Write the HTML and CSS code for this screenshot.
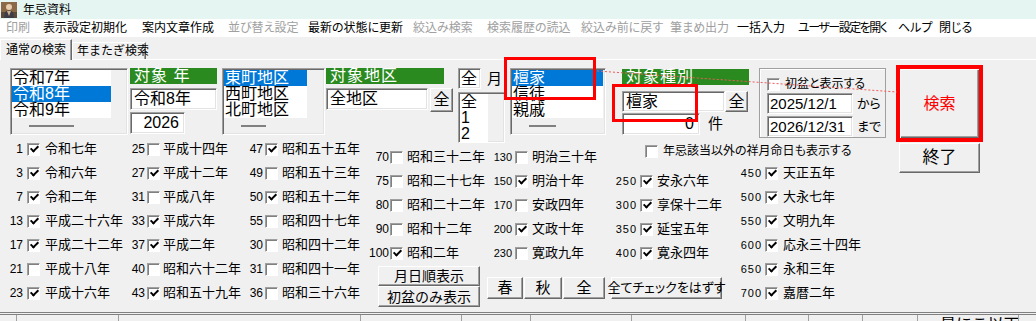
FILE: index.html
```html
<!DOCTYPE html>
<html>
  <head>
    <meta charset="utf-8">
    <title>年忌資料</title>
    <link rel="stylesheet" href="styles.css">
  </head>
  <body>
    <div id="window">
      <div class="titlebar">
        <svg class="appicon" width="16" height="16" viewBox="0 0 16 16">
          <rect width="16" height="16" fill="#8c6a48"/>
          <rect x="0" y="10" width="16" height="6" fill="#5e4a3a"/>
          <circle cx="8" cy="5" r="3" fill="#e8cfae"/>
          <path d="M3 16 L4 10 Q8 7 12 10 L13 16 Z" fill="#3d3d4a"/>
          <path d="M6 9 L8 14 L10 9" fill="#c9b48f"/>
        </svg>
        <span>年忌資料</span>
      </div>

      <div class="menubar">
        <span class="off">印刷</span>
        <span>表示設定初期化</span>
        <span>案内文章作成</span>
        <span class="off">並び替え設定</span>
        <span>最新の状態に更新</span>
        <span class="off">絞込み検索</span>
        <span class="off">検索履歴の読込</span>
        <span class="off">絞込み前に戻す</span>
        <span class="off">筆まめ出力</span>
        <span>一括入力</span>
        <span class="tight">ユーザー設定を開く</span>
        <span>ヘルプ</span>
        <span>閉じる</span>
      </div>

      <div class="tabs">
        <div class="tab active">通常の検索</div>
        <div class="tab">年またぎ検索</div>
      </div>

      <div class="page">
        <div class="form">
          <div class="left">
            <div class="top">
              <div class="listbox lb-year">
                <div class="items">
                  <div class="row">令和7年</div>
                  <div class="row sel">令和8年</div>
                  <div class="row">令和9年</div>
                </div>
                <div class="thumb"></div>
              </div>

              <div class="field f-year">
                <div class="head">対象 年</div>
                <div class="textbox">令和8年</div>
                <div class="textbox right">2026</div>
              </div>

              <div class="listbox lb-area">
                <div class="items">
                  <div class="row sel">東町地区</div>
                  <div class="row">西町地区</div>
                  <div class="row">北町地区</div>
                </div>
                <div class="thumb"></div>
              </div>

              <div class="field f-area">
                <div class="head">対象地区</div>
                <div class="pair">
                  <div class="textbox">全地区</div>
                  <button class="btn all">全</button>
                </div>
              </div>

              <div class="field f-month">
                <div class="pair">
                  <div class="textbox">全</div>
                  <span class="unit">月</span>
                </div>
                <div class="listbox lb-month">
                  <div class="items">
                    <div class="row">全</div>
                    <div class="row">1</div>
                    <div class="row">2</div>
                  </div>
                </div>
              </div>

              <div class="listbox lb-type">
                <div class="items">
                  <div class="row sel">檀家</div>
                  <div class="row">信徒</div>
                  <div class="row">親戚</div>
                </div>
                <div class="thumb"></div>
              </div>

              <div class="field f-type">
                <div class="head">対象種別</div>
                <div class="pair">
                  <div class="textbox">檀家</div>
                  <button class="btn all">全</button>
                </div>
                <div class="pair count">
                  <div class="textbox right">0</div>
                  <span class="unit">件</span>
                </div>
              </div>

              <div class="dates">
                <div class="check">
                  <span class="cb"></span>
                  <span>初盆と表示する</span>
                </div>
                <div class="pair">
                  <div class="textbox">2025/12/1</div>
                  <span class="unit">から</span>
                </div>
                <div class="pair">
                  <div class="textbox">2026/12/31</div>
                  <span class="unit">まで</span>
                </div>
              </div>
            </div>

            <div class="lower">
              <div class="col c1">
                <div class="item"><span class="num">1</span><span class="cb on"></span><span class="lbl">令和七年</span></div>
                <div class="item"><span class="num">3</span><span class="cb on"></span><span class="lbl">令和六年</span></div>
                <div class="item"><span class="num">7</span><span class="cb on"></span><span class="lbl">令和二年</span></div>
                <div class="item"><span class="num">13</span><span class="cb on"></span><span class="lbl">平成二十六年</span></div>
                <div class="item"><span class="num">17</span><span class="cb on"></span><span class="lbl">平成二十二年</span></div>
                <div class="item"><span class="num">21</span><span class="cb"></span><span class="lbl">平成十八年</span></div>
                <div class="item"><span class="num">23</span><span class="cb on"></span><span class="lbl">平成十六年</span></div>
              </div>
              <div class="col c2">
                <div class="item"><span class="num">25</span><span class="cb"></span><span class="lbl">平成十四年</span></div>
                <div class="item"><span class="num">27</span><span class="cb on"></span><span class="lbl">平成十二年</span></div>
                <div class="item"><span class="num">31</span><span class="cb"></span><span class="lbl">平成八年</span></div>
                <div class="item"><span class="num">33</span><span class="cb on"></span><span class="lbl">平成六年</span></div>
                <div class="item"><span class="num">37</span><span class="cb on"></span><span class="lbl">平成二年</span></div>
                <div class="item"><span class="num">40</span><span class="cb"></span><span class="lbl">昭和六十二年</span></div>
                <div class="item"><span class="num">43</span><span class="cb on"></span><span class="lbl">昭和五十九年</span></div>
              </div>
              <div class="col c3">
                <div class="item"><span class="num">47</span><span class="cb on"></span><span class="lbl">昭和五十五年</span></div>
                <div class="item"><span class="num">49</span><span class="cb"></span><span class="lbl">昭和五十三年</span></div>
                <div class="item"><span class="num">50</span><span class="cb on"></span><span class="lbl">昭和五十二年</span></div>
                <div class="item"><span class="num">55</span><span class="cb"></span><span class="lbl">昭和四十七年</span></div>
                <div class="item"><span class="num">30</span><span class="cb"></span><span class="lbl">昭和四十二年</span></div>
                <div class="item"><span class="num">31</span><span class="cb"></span><span class="lbl">昭和四十一年</span></div>
                <div class="item"><span class="num">36</span><span class="cb"></span><span class="lbl">昭和三十六年</span></div>
              </div>

              <div class="middle">
                <div class="cols">
                  <div class="col c4">
                    <div class="item"><span class="num">70</span><span class="cb"></span><span class="lbl">昭和三十二年</span></div>
                    <div class="item"><span class="num">75</span><span class="cb"></span><span class="lbl">昭和二十七年</span></div>
                    <div class="item"><span class="num">80</span><span class="cb"></span><span class="lbl">昭和二十二年</span></div>
                    <div class="item"><span class="num">90</span><span class="cb"></span><span class="lbl">昭和十二年</span></div>
                    <div class="item"><span class="num">100</span><span class="cb on"></span><span class="lbl">昭和二年</span></div>
                  </div>
                  <div class="col c5">
                    <div class="item"><span class="num">130</span><span class="cb"></span><span class="lbl">明治三十年</span></div>
                    <div class="item"><span class="num">150</span><span class="cb on"></span><span class="lbl">明治十年</span></div>
                    <div class="item"><span class="num">170</span><span class="cb"></span><span class="lbl">安政四年</span></div>
                    <div class="item"><span class="num">200</span><span class="cb on"></span><span class="lbl">文政十年</span></div>
                    <div class="item"><span class="num">230</span><span class="cb"></span><span class="lbl">寛政九年</span></div>
                  </div>
                  <div class="col c6">
                    <div class="check wide">
                      <span class="cb"></span>
                      <span>年忌該当以外の祥月命日も表示する</span>
                    </div>
                    <div class="item"><span class="num">250</span><span class="cb on"></span><span class="lbl">安永六年</span></div>
                    <div class="item"><span class="num">300</span><span class="cb on"></span><span class="lbl">享保十二年</span></div>
                    <div class="item"><span class="num">350</span><span class="cb on"></span><span class="lbl">延宝五年</span></div>
                    <div class="item"><span class="num">400</span><span class="cb on"></span><span class="lbl">寛永四年</span></div>
                  </div>
                </div>
                <div class="buttons">
                  <div class="stack">
                    <button class="btn sm">月日順表示</button>
                    <button class="btn sm tall">初盆のみ表示</button>
                  </div>
                  <button class="btn season spring">春</button>
                  <button class="btn season autumn">秋</button>
                  <button class="btn season every">全</button>
                  <button class="btn clear">全てチェックをはずす</button>
                </div>
              </div>

              <div class="col c7">
                <div class="item"><span class="num">450</span><span class="cb on"></span><span class="lbl">天正五年</span></div>
                <div class="item"><span class="num">500</span><span class="cb on"></span><span class="lbl">大永七年</span></div>
                <div class="item"><span class="num">550</span><span class="cb on"></span><span class="lbl">文明九年</span></div>
                <div class="item"><span class="num">600</span><span class="cb on"></span><span class="lbl">応永三十四年</span></div>
                <div class="item"><span class="num">650</span><span class="cb on"></span><span class="lbl">永和三年</span></div>
                <div class="item"><span class="num">700</span><span class="cb on"></span><span class="lbl">嘉暦二年</span></div>
              </div>
            </div>
          </div>

          <div class="actions">
            <button class="btn search">検索</button>
            <button class="btn quit">終了</button>
          </div>
        </div>
      </div>

      <div class="statusbar">
        <div></div><div></div><div></div><div></div><div></div><div></div>
        <div></div><div></div><div></div><div></div><div class="status-text">最にこ以下</div><div></div>
      </div>

      <div class="mark mark-list"></div>
      <div class="mark mark-type"></div>
      <svg class="link" width="1036" height="321">
        <line x1="597" y1="71" x2="897" y2="92" stroke="#f05a5a" stroke-width="1" stroke-dasharray="2 2"/>
      </svg>
    </div>
  </body>
</html>
```

FILE: styles.css
```css
* {
  box-sizing: border-box;
}

body {
  margin: 0;
  background: #f0f0f0;
  color: #000;
  font-family: "Liberation Sans", "Noto Sans CJK JP", sans-serif;
  overflow: hidden;
}

#window {
  position: relative;
  width: 1036px;
  height: 321px;
  overflow: hidden;
}

/* title and menu */

.titlebar {
  height: 19px;
  display: flex;
  align-items: center;
  background: #e5f6f2;
  font-size: 12px;
  line-height: 14px;
}

.appicon {
  margin: 0 6px 0 1px;
}

.menubar {
  height: 18px;
  display: grid;
  grid-template-columns: 37px 99px 86px 80px 105px 74px 94px 89px 67px 61px 100px 41px auto;
  align-items: center;
  padding-left: 6px;
  background: #fff;
  font-size: 12px;
  line-height: 18px;
  white-space: nowrap;
  font-feature-settings: "palt";
}

.menubar .off {
  color: #a0a0a0;
}

.menubar .tight {
  letter-spacing: -1.5px;
}

/* tabs */

.tabs {
  height: 22px;
  display: flex;
  align-items: flex-end;
  font-size: 12px;
  line-height: 16px;
  position: relative;
  z-index: 1;
}

.tab {
  height: 17px;
  padding-left: 4px;
  border-top: 1px solid #fff;
  border-left: 1px solid #fff;
  border-right: 1px solid #696969;
  box-shadow: inset -1px 0 #a0a0a0;
  white-space: nowrap;
}

.tab.active {
  width: 72px;
  height: 21px;
  margin-bottom: -1px;
  padding: 2px 0 0 5px;
  background: #f0f0f0;
}

.tab + .tab {
  width: 74px;
}

/* page */

.page {
  height: 253px;
  border-top: 1px solid #fff;
}

.form {
  display: flex;
}

.left {
  width: 886px;
}

.top {
  height: 69px;
  margin-top: 8px;
  display: flex;
  align-items: flex-start;
}

.listbox,
.textbox {
  border: 1px solid;
  border-color: #a0a0a0 #fff #fff #a0a0a0;
  box-shadow: inset 1px 1px #696969, inset -1px -1px #e3e3e3;
}

.listbox {
  height: 67px;
  padding: 1px;
}

.items {
  background: #fff;
  height: 48px;
  overflow: hidden;
}

.row {
  height: 16px;
  padding-left: 1px;
  font-size: 16px;
  line-height: 16px;
  white-space: nowrap;
}

.row.sel {
  background: #0078d7;
  color: #fff;
}

.thumb {
  height: 2px;
  margin: 7px 0 0 17px;
  background: #808080;
}

.lb-year {
  width: 118px;
  margin-left: 10px;
}

.lb-year .items {
  width: 99px;
}

.lb-year .thumb {
  width: 45px;
}

.lb-area {
  width: 103px;
  margin-left: 5px;
}

.lb-area .items {
  width: 83px;
}

.lb-area .thumb {
  width: 25px;
}

.lb-type {
  width: 96px;
  margin-left: 5px;
}

.lb-type .items {
  width: 91px;
}

.lb-type .thumb {
  width: 27px;
}

.head {
  height: 16px;
  padding-left: 4px;
  background: #2a8a20;
  color: #fff;
  font-size: 16px;
  line-height: 16px;
  letter-spacing: 1px;
  white-space: nowrap;
}

.textbox {
  height: 22px;
  padding-left: 3px;
  background: #fff;
  font-size: 16px;
  line-height: 20px;
  white-space: nowrap;
}

.textbox.right {
  text-align: right;
  padding: 0 5px 0 0;
}

.pair {
  display: flex;
  align-items: center;
}

.unit {
  font-size: 15px;
  line-height: 18px;
  white-space: nowrap;
}

.f-year {
  width: 87px;
  margin-left: 2px;
}

.f-year .head + .textbox {
  margin-top: 4px;
}

.f-year .right {
  width: 55px;
  margin-top: 2px;
}

.f-area {
  width: 127px;
  margin-left: 1px;
}

.f-area .head {
  width: 118px;
}

.f-area .pair {
  margin-top: 4px;
  align-items: flex-start;
}

.f-area .textbox {
  width: 102px;
}

.btn {
  display: flex;
  align-items: center;
  justify-content: center;
  padding: 0;
  background: #f0f0f0;
  color: #000;
  font-family: inherit;
  border: 1px solid;
  border-color: #fff #696969 #696969 #fff;
  box-shadow: inset -1px -1px #a0a0a0;
  white-space: nowrap;
}

.btn.all {
  width: 23px;
  height: 24px;
  margin-left: 2px;
  font-size: 16px;
  line-height: 18px;
}

.f-month {
  width: 47px;
  margin-left: 5px;
}

.f-month .textbox {
  width: 23px;
  height: 21px;
  padding-left: 2px;
}

.f-month .unit {
  margin-left: 6px;
}

.lb-month {
  width: 47px;
  height: 51px;
  margin-top: 3px;
}

.lb-month .items {
  width: 28px;
  height: 49px;
}

.f-type {
  width: 127px;
  margin: 1px 0 0 16px;
}

.f-type .head + .pair {
  margin-top: 6px;
}

.f-type .textbox {
  width: 103px;
  height: 21px;
}

.f-type .btn.all {
  height: 21px;
  margin-left: 0;
}

.count {
  margin-top: 1px;
}

.f-type .count .textbox {
  width: 78px;
  height: 22px;
}

.count .unit {
  margin-left: 8px;
}

.dates {
  width: 127px;
  height: 70px;
  margin-left: 10px;
  padding-left: 7px;
  border: 1px solid #a0a0a0;
  box-shadow: inset 1px 1px #fff;
}

.dates .check {
  margin-top: 8px;
}

.dates .pair {
  margin-top: 2px;
}

.dates .textbox {
  width: 86px;
  height: 21px;
  padding-left: 2px;
  font-size: 15px;
  line-height: 19px;
}

.dates .unit {
  margin-left: 4px;
  font-size: 13px;
  font-feature-settings: "palt";
}

.check {
  display: flex;
  align-items: center;
  font-size: 12px;
  line-height: 14px;
  white-space: nowrap;
  font-feature-settings: "palt";
}

.check .cb {
  margin-right: 5px;
}

/* check boxes */

.cb {
  flex: none;
  width: 13px;
  height: 13px;
  display: flex;
  align-items: center;
  justify-content: center;
  background: #fff;
  border: 1px solid;
  border-color: #a0a0a0 #fff #fff #a0a0a0;
  box-shadow: inset 1px 1px #808080;
}

.cb.on::after {
  content: "";
  width: 3px;
  height: 6px;
  margin: -2px 0 0 1px;
  border: solid #000;
  border-width: 0 2px 2px 0;
  transform: rotate(45deg);
}

.lower {
  height: 175px;
  display: flex;
}

.col {
  display: flex;
  flex-direction: column;
}

.item {
  height: 24px;
  display: flex;
  align-items: center;
  white-space: nowrap;
}

.num {
  flex: none;
  text-align: right;
  font-size: 12px;
  line-height: 14px;
}

.lbl {
  font-size: 13px;
  line-height: 16px;
}

.c1 { width: 120px; }
.c1 .num { width: 23px; }
.c1 .cb { margin-left: 4px; }
.c1 .lbl { margin-left: 5px; }

.c2 { width: 120px; }
.c2 .num { width: 25px; }
.c2 .cb { margin-left: 2px; }
.c2 .lbl { margin-left: 3px; }

.c3 { width: 120px; }
.c3 .num { width: 23px; }
.c3 .cb { margin-left: 2px; }
.c3 .lbl { margin-left: 4px; }

.middle {
  width: 362px;
}

.cols {
  height: 128px;
  display: flex;
}

.c4 { width: 125px; padding-top: 8px; }
.c4 .num { width: 29px; }
.c4 .cb { margin-left: 1px; }
.c4 .lbl { margin-left: 4px; }

.c5 { width: 112px; padding-top: 8px; }
.c5 .num { width: 27px; font-size: 11px; }
.c5 .cb { margin-left: 3px; }
.c5 .lbl { margin-left: 4px; }

.c6 { width: 125px; padding-top: 2px; }
.c6 .num { width: 40px; font-size: 11px; letter-spacing: 1px; }
.c6 .cb { margin-left: 3px; }
.c6 .lbl { margin-left: 4px; }

.check.wide {
  height: 24px;
  margin: 0 0 6px 45px;
  font-size: 12px;
}

.c7 { padding-top: 24px; }
.c7 .num { width: 40px; font-size: 11px; letter-spacing: 1px; }
.c7 .cb { margin-left: 3px; }
.c7 .lbl { margin-left: 5px; }

.buttons {
  display: flex;
  align-items: flex-start;
  margin: 1px 0 0 18px;
}

.stack {
  display: flex;
  flex-direction: column;
}

.btn.sm {
  width: 102px;
  height: 20px;
  font-size: 14px;
  line-height: 16px;
}

.btn.sm.tall {
  height: 21px;
}

.btn.season {
  height: 22px;
  margin: 11px 0 0 1px;
  font-size: 15px;
  line-height: 18px;
}

.spring { width: 36px; margin-left: 7px !important; }
.autumn { width: 38px; }
.every { width: 42px; }

.btn.clear {
  width: 111px;
  height: 22px;
  margin: 11px 0 0 6px;
  font-size: 13px;
  line-height: 16px;
  font-feature-settings: "palt";
}

/* right buttons */

.actions {
  display: flex;
  flex-direction: column;
  align-items: center;
  width: 87px;
  margin: 5px 0 0 10px;
}

.btn.search {
  width: 87px;
  height: 77px;
  border: 4px solid #ff0000;
  box-shadow: inset 1px 1px #fff, inset -1px -1px #696969, inset -2px -2px #a0a0a0;
  color: #ff0000;
  font-size: 16px;
  line-height: 18px;
}

.btn.quit {
  width: 81px;
  height: 30px;
  margin-top: 1px;
  font-size: 17px;
  line-height: 20px;
}

/* status bar */

.statusbar {
  height: 12px;
  display: grid;
  grid-template-columns: 16px 102px 242px 101px 69px 101px 114px 63px 54px 55px 101px 18px;
  border-top: 3px double #808080;
}

.statusbar div + div {
  border-left: 1px solid #a0a0a0;
}

.status-text {
  padding: 1px 0 0 22px;
  font-size: 16px;
  line-height: 18px;
  white-space: nowrap;
}

/* highlight overlays */

.mark {
  position: absolute;
  border: 3px solid #ff0000;
}

.mark-list {
  left: 504px;
  top: 57px;
  width: 92px;
  height: 43px;
}

.mark-type {
  left: 612px;
  top: 84px;
  width: 86px;
  height: 38px;
}

.link {
  position: absolute;
  left: 0;
  top: 0;
  pointer-events: none;
}
```
